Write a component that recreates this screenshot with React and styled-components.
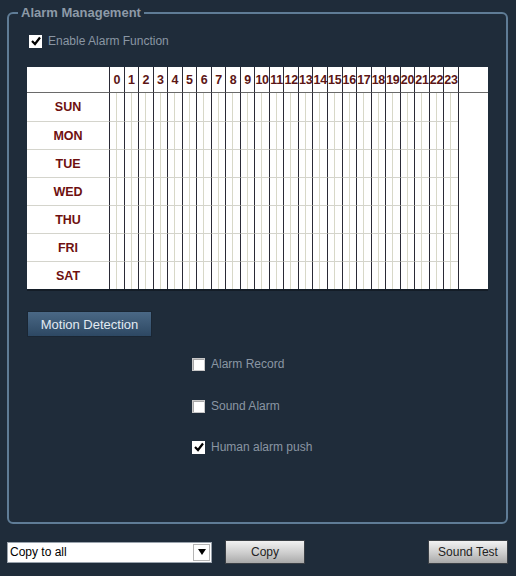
import React from 'react';
import styled, { createGlobalStyle } from 'styled-components';

const GlobalStyle = createGlobalStyle`
  html, body {
    margin: 0;
    padding: 0;
    background: #1f2c3a;
  }
  body {
    font-family: 'Liberation Sans', Arial, sans-serif;
    font-size: 12px;
  }
`;

const Page = styled.div`
  width: 516px;
  height: 576px;
  padding-top: 6px;
  box-sizing: border-box;
  background: #1f2c3a;
`;

const Panel = styled.fieldset`
  margin: 0 8px 0 7px;
  padding: 14px 18px 0 18px;
  height: 518px;
  box-sizing: border-box;
  min-inline-size: 0;
  border: 2px solid #5f7c96;
  border-radius: 6px;
  display: flex;
  flex-direction: column;
`;

const Legend = styled.legend`
  margin-left: -9px;
  padding: 0 3px 0 3px;
  color: #8d9aa7;
  font-weight: bold;
  font-size: 13px;
  line-height: 14px;
`;

const CheckRow = styled.label`
  display: flex;
  align-items: center;
  gap: 6px;
  height: 14px;
  color: #8a96a3;
  font-size: 12px;
  margin-left: ${p => p.$indent || 0}px;
  margin-top: ${p => p.$top || 0}px;
`;

const Box = styled.span`
  width: 13px;
  height: 13px;
  box-sizing: border-box;
  background: #fff;
  border: 1px solid ${p => (p.$checked ? '#fff' : '#c8c8c8')};
  box-shadow: inset 1px 1px 0 ${p => (p.$checked ? '#fff' : '#a8a8a8')};
  display: flex;
  align-items: center;
  justify-content: center;
`;

const CheckBox = ({ checked }) => (
  <Box $checked={checked}>
    {checked && (
      <svg width="10" height="10" viewBox="0 0 10 10">
        <path d="M1 5 L4 8 L9 1.5" stroke="#000" strokeWidth="2.2" fill="none" />
      </svg>
    )}
  </Box>
);

const Schedule = styled.div`
  margin-top: 19px;
  width: 461px;
  display: grid;
  grid-template-columns: 82px repeat(24, 14.54px) 1fr;
  grid-template-rows: 26px repeat(7, 28px);
  background: #fff;
  box-shadow: 0 2px 0 #141d27;
`;

const Corner = styled.div`
  border-bottom: 1px solid #6a6a6a;
`;

const HourHead = styled.div`
  border-left: 1px solid #2a2a36;
  border-bottom: 1px solid #6a6a6a;
  display: flex;
  align-items: center;
  justify-content: center;
  color: #5c1616;
  font-weight: bold;
  font-size: 12.5px;
  letter-spacing: -0.3px;
  white-space: nowrap;
  overflow: visible;
`;

const Filler = styled.div`
  border-left: 1px solid #2a2a36;
  border-bottom: ${p => (p.$head ? '1px solid #6a6a6a' : 'none')};
`;

const DayCell = styled.div`
  border-top: ${p => (p.$first ? 'none' : '1px solid #d4d4cc')};
  display: flex;
  align-items: center;
  justify-content: center;
  color: #6e1010;
  font-weight: bold;
  font-size: 12.5px;
`;

const Slot = styled.div`
  position: relative;
  border-left: 1px solid #2a2a36;
  border-top: ${p => (p.$first ? 'none' : '1px solid #d4d4cc')};
  &::after {
    content: '';
    position: absolute;
    top: 0;
    bottom: 0;
    left: 6px;
    width: 1px;
    background: #d8d8c8;
  }
`;

const MotionButton = styled.button`
  margin-top: 22px;
  width: 125px;
  height: 26px;
  border: 1px solid #1a2633;
  background: linear-gradient(#4a6885, #2d4863);
  color: #e2eaf2;
  font-family: 'Liberation Sans', Arial, sans-serif;
  font-size: 13px;
  padding: 0;
`;

const BottomBar = styled.div`
  display: flex;
  align-items: center;
  margin: 16px 8px 0 7px;
`;

const Select = styled.div`
  width: 205px;
  height: 21px;
  box-sizing: border-box;
  background: #fff;
  border: 1px solid #9aa3ad;
  display: flex;
  align-items: center;
  justify-content: space-between;
  padding-left: 2px;
  color: #000;
  font-size: 12px;
`;

const Arrow = styled.span`
  width: 17px;
  height: 17px;
  box-sizing: border-box;
  border: 1px solid #b5b5b5;
  margin-right: 1px;
  display: flex;
  align-items: center;
  justify-content: center;
`;

const GrayButton = styled.button`
  width: 80px;
  height: 24px;
  box-sizing: border-box;
  margin-left: ${p => (p.$push ? 'auto' : '13px')};
  border: 1px solid #3a3f45;
  background: linear-gradient(#f2f2f2, #c9c9c9 60%, #a9a9a9);
  color: #222;
  font-family: 'Liberation Sans', Arial, sans-serif;
  font-size: 12px;
  padding: 0;
`;

const days = ['SUN', 'MON', 'TUE', 'WED', 'THU', 'FRI', 'SAT'];
const hours = Array.from({ length: 24 }, (_, i) => i);

export default function App() {
  return (
    <Page>
      <GlobalStyle />
      <Panel>
        <Legend>Alarm Management</Legend>
        <CheckRow $indent={2}>
          <CheckBox checked />
          Enable Alarm Function
        </CheckRow>

        <Schedule>
          <Corner />
          {hours.map(h => (
            <HourHead key={h}>{h}</HourHead>
          ))}
          <Filler $head />
          {days.map((d, r) => (
            <React.Fragment key={d}>
              <DayCell $first={r === 0}>{d}</DayCell>
              {hours.map(h => (
                <Slot key={h} $first={r === 0} />
              ))}
              <Filler />
            </React.Fragment>
          ))}
        </Schedule>

        <div>
          <MotionButton>Motion Detection</MotionButton>
        </div>

        <CheckRow $indent={165} $top={20}>
          <CheckBox />
          Alarm Record
        </CheckRow>
        <CheckRow $indent={165} $top={28}>
          <CheckBox />
          Sound Alarm
        </CheckRow>
        <CheckRow $indent={165} $top={27}>
          <CheckBox checked />
          Human alarm push
        </CheckRow>
      </Panel>

      <BottomBar>
        <Select>
          Copy to all
          <Arrow>
            <svg width="8" height="6" viewBox="0 0 8 6">
              <path d="M0 0 H8 L4 6 Z" fill="#000" />
            </svg>
          </Arrow>
        </Select>
        <GrayButton>Copy</GrayButton>
        <GrayButton $push>Sound Test</GrayButton>
      </BottomBar>
    </Page>
  );
}
